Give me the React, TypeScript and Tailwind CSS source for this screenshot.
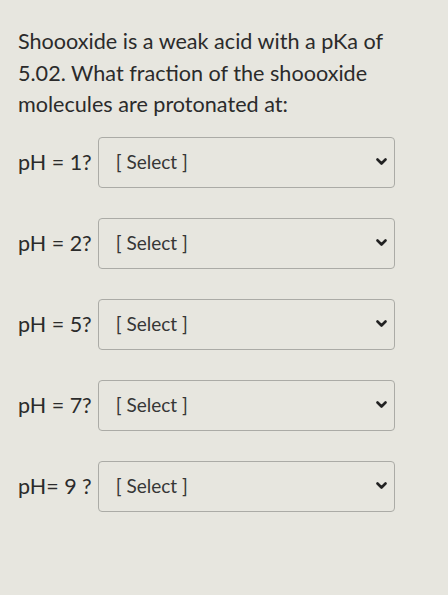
const rows = ['pH = 1?', 'pH = 2?', 'pH = 5?', 'pH = 7?', 'pH= 9 ?'];

export default function App() {
  return (
    <div className="w-[448px] h-[595px] bg-[#e7e6df] text-[#2b2b2b] font-['Lato',sans-serif] overflow-hidden">
      <div className="pt-[26px] pl-[18px]">
        <p className="text-[21.6px] leading-[31.5px] whitespace-nowrap">
          Shoooxide is a weak acid with a pKa of
          <br />
          5.02. What fraction of the shoooxide
          <br />
          molecules are protonated at:
        </p>
        <div className="mt-[16px] flex flex-col gap-[30px]">
          {rows.map((label) => (
            <div key={label} className="flex items-center">
              <span className="text-[21.5px] whitespace-pre">{label}</span>
              <div className="ml-[6px] w-[297px] h-[51px] border border-[#ababa6] rounded-[4px] flex items-center justify-between pl-[17px] pr-[7px]">
                <span className="text-[19px] text-[#363636]">[ Select ]</span>
                <svg width="11" height="8" viewBox="0 0 11 8" className="text-[#222]">
                  <polyline points="1.5,1.5 5.5,5.5 9.5,1.5" fill="none" stroke="currentColor" strokeWidth="2.6" strokeLinecap="round" strokeLinejoin="round" />
                </svg>
              </div>
            </div>
          ))}
        </div>
      </div>
    </div>
  );
}
